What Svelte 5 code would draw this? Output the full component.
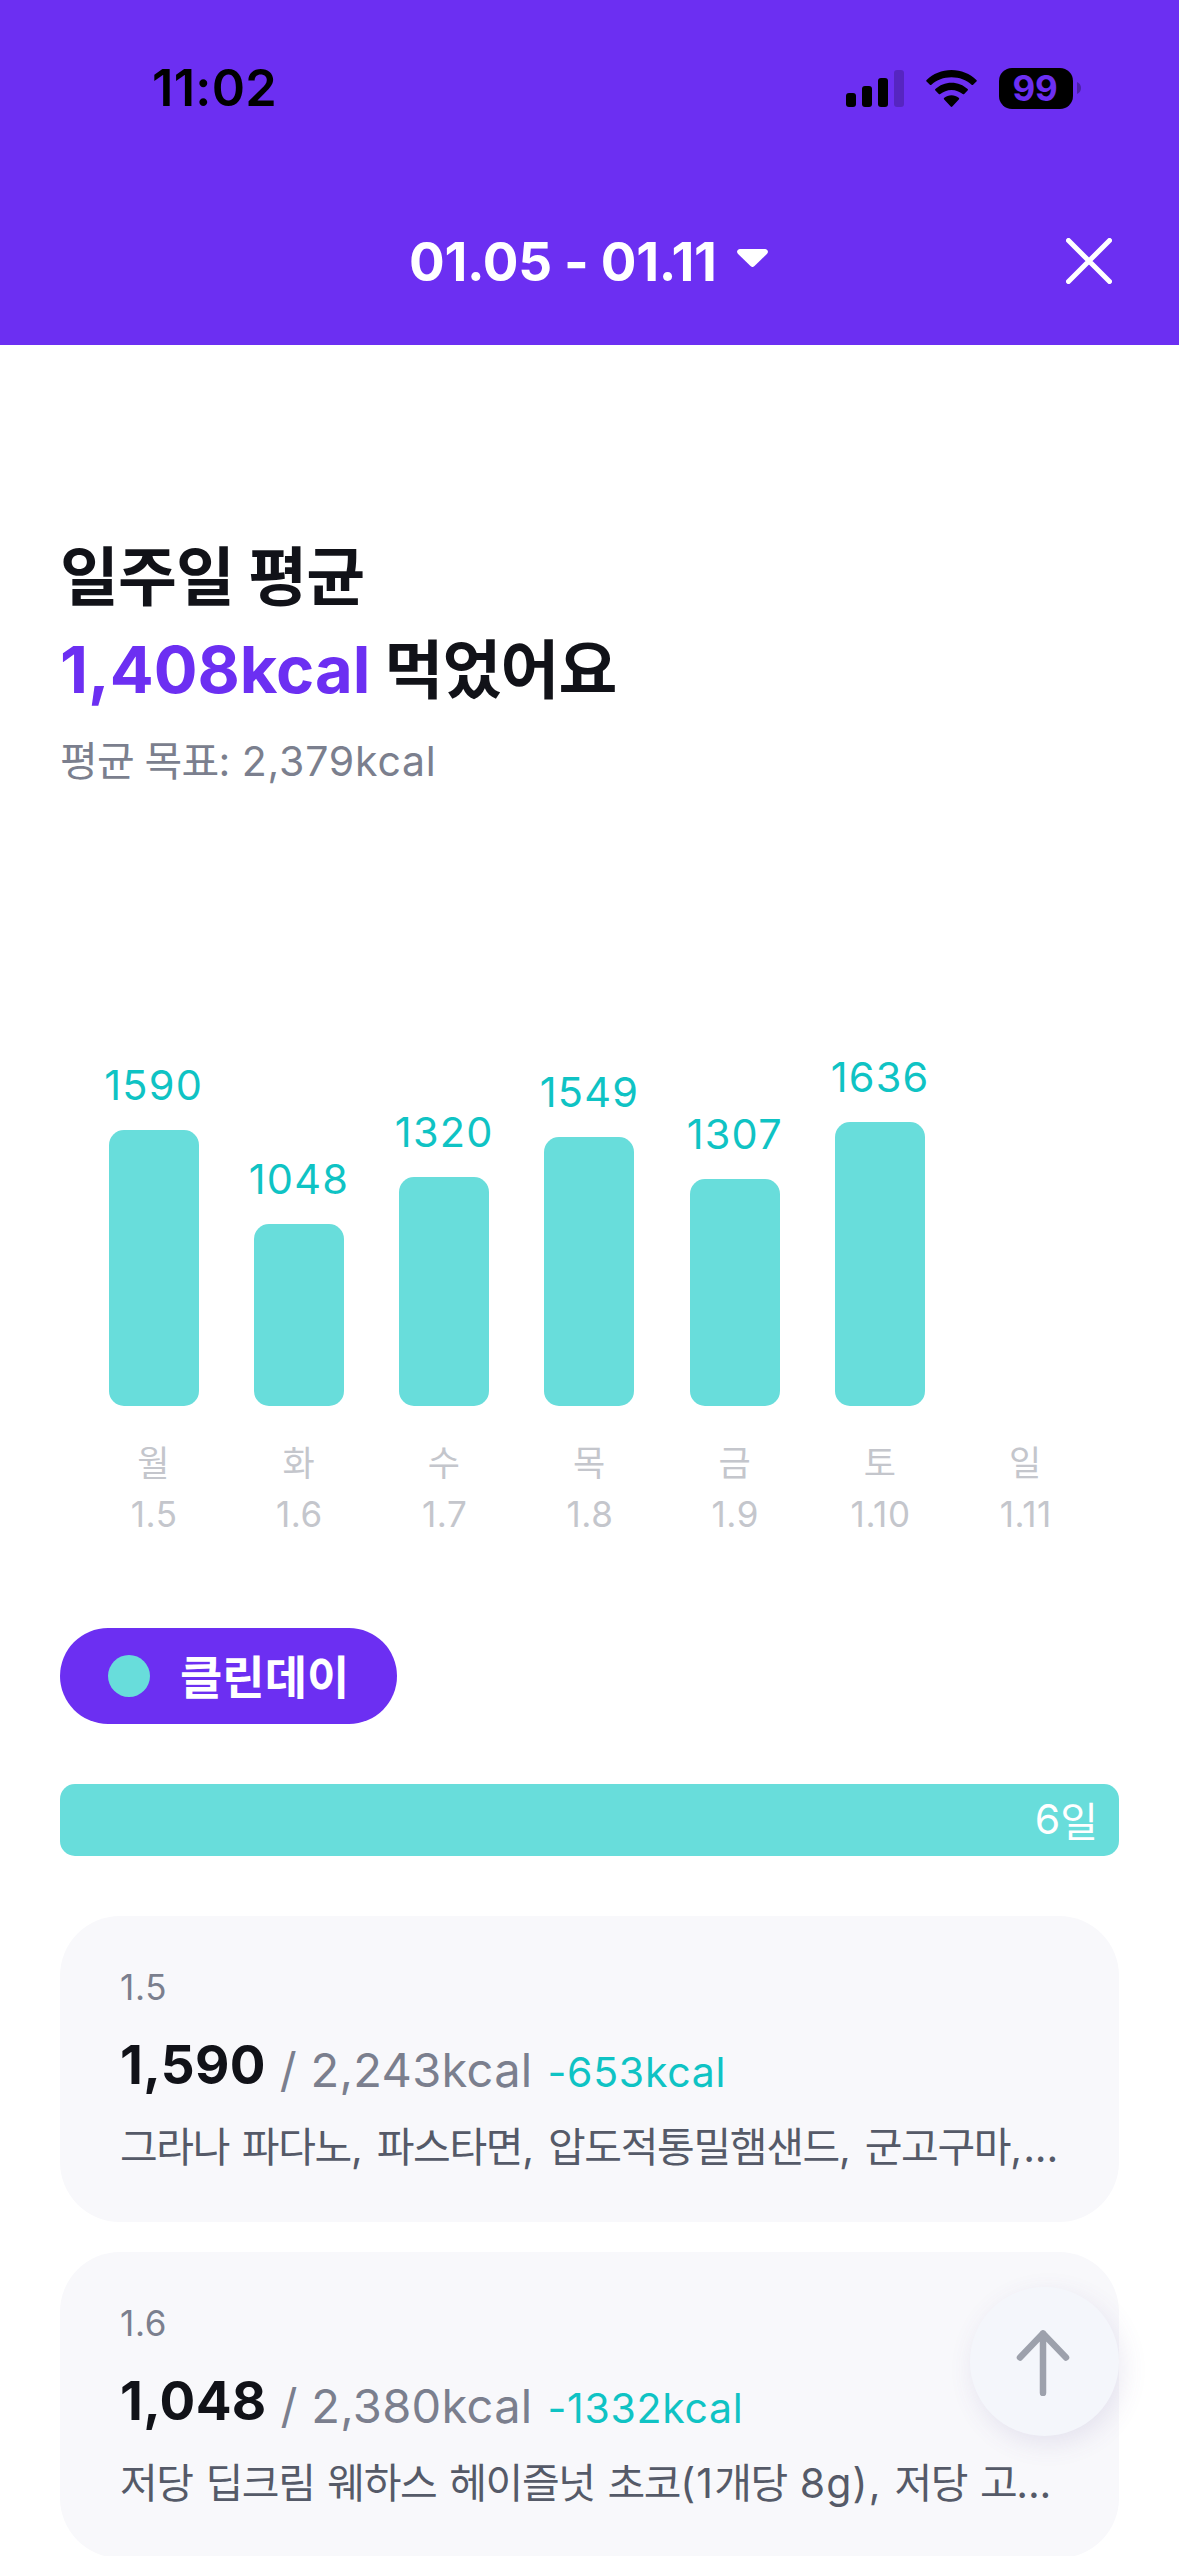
<script>
  const days = [
    { day: '월', date: '1.5', kcal: 1590, height: 276 },
    { day: '화', date: '1.6', kcal: 1048, height: 182 },
    { day: '수', date: '1.7', kcal: 1320, height: 229 },
    { day: '목', date: '1.8', kcal: 1549, height: 269 },
    { day: '금', date: '1.9', kcal: 1307, height: 227 },
    { day: '토', date: '1.10', kcal: 1636, height: 284 },
    { day: '일', date: '1.11', kcal: null, height: 0 }
  ];

  const meals = [
    { date: '1.5', eaten: '1,590', goal: '2,243', diff: '-653', foods: '그라나 파다노, 파스타면, 압도적통밀햄샌드, 군고구마,...' },
    { date: '1.6', eaten: '1,048', goal: '2,380', diff: '-1332', foods: '저당 딥크림 웨하스 헤이즐넛 초코(1개당 8g), 저당 고...' }
  ];

  // Splits text into Hangul, ellipsis and other runs, which are tracked differently.
  function runs(text) {
    return text
      .match(/[가-힣]+|\.{3}|[^가-힣.]+/g)
      .map((t) => ({ t, ko: /[가-힣]/.test(t), dots: t === '...' }));
  }
</script>

<div class="screen">
  <header>
    <div class="status">
      <span class="time">11:02</span>
      <div class="indicators">
        <svg class="signal" width="58" height="37" viewBox="0 0 58 37">
          <rect x="0" y="23" width="10" height="14" rx="3" />
          <rect x="16" y="16" width="10" height="21" rx="3" />
          <rect x="32" y="8" width="10" height="29" rx="3" />
          <rect x="48" y="0" width="10" height="37" rx="3" opacity="0.2" />
        </svg>
        <svg class="wifi" width="51" height="37" viewBox="0 0 51 37">
          <path d="M25.5 0C15.800 0 7 3.800 .6 9.900a1.100 1.100 0 0 0 0 1.600l3.300 3.300c.4.4 1.100.4 1.500 0C10.700 9.900 17.700 7.200 25.500 7.200s14.800 2.700 20.100 7.600c.4.4 1.100.4 1.500 0l3.300-3.300a1.100 1.100 0 0 0 0-1.600C44 3.800 35.200 0 25.500 0Z" />
          <path d="M25.500 12.700c-6.200 0-11.900 2.400-16.100 6.300a1.100 1.100 0 0 0 0 1.600l3.400 3.400c.4.400 1.100.4 1.500.1 3-2.600 6.900-4.200 11.200-4.200s8.200 1.600 11.200 4.200c.4.3 1.100.3 1.500-.1l3.400-3.400a1.100 1.100 0 0 0 0-1.600c-4.200-3.900-9.900-6.300-16.100-6.300Z" />
          <path d="M25.500 25.300c-2.700 0-5.200 1-7.200 2.500a1.100 1.100 0 0 0-.1 1.700l6.500 7c.4.5 1.200.5 1.600 0l6.500-7a1.100 1.100 0 0 0-.1-1.700c-2-1.500-4.500-2.500-7.200-2.500Z" />
        </svg>
        <div class="battery"><span class="level">99</span></div>
        <svg class="nub" width="4" height="12" viewBox="0 0 4 12"><path d="M0 0c2.500 1 4 3.300 4 6s-1.500 5-4 6Z" /></svg>
      </div>
    </div>
    <div class="titlebar">
      <span class="range">01.05 - 01.11</span>
      <svg class="caret" width="31" height="18" viewBox="0 0 31 18"><path d="M3 0h25c2.600 0 3.900 3 2.100 4.800l-12.600 12.300a2.900 2.900 0 0 1-4 0L.9 4.800C-.9 3 .4 0 3 0Z" /></svg>
      <svg class="close" width="46" height="46" viewBox="0 0 46 46"><path d="M2.500 2.500l41 41M43.500 2.500l-41 41" /></svg>
    </div>
  </header>

  <main>
    <h1>
      <span class="line">일주일 평균</span>
      <span class="line"><em>1,408kcal</em> 먹었어요</span>
    </h1>
    <p class="target"><span class="ko">평균 목표:</span> 2,379kcal</p>

    <section class="chart">
      {#each days as d}
        <div class="col">
          <div class="plot">
            {#if d.kcal}
              <span class="value">{d.kcal}</span>
              <div class="bar" style="height: {d.height}px"></div>
            {/if}
          </div>
          <span class="day">{d.day}</span>
          <span class="date">{d.date}</span>
        </div>
      {/each}
    </section>

    <div class="pill"><i class="dot"></i><span class="label">클린데이</span></div>
    <div class="total">6<span>일</span></div>

    {#each meals as m}
      <article class="card">
        <span class="when">{m.date}</span>
        <div class="numbers">
          <strong>{m.eaten}</strong>
          <span class="goal">/ {m.goal}kcal</span>
          <span class="diff">{m.diff}kcal</span>
        </div>
        <p class="foods">{#each runs(m.foods) as r}<span class:hangul={r.ko} class:dots={r.dots}>{r.t}</span>{/each}</p>
      </article>
    {/each}
  </main>

  <button class="top" aria-label="맨 위로">
    <svg width="54" height="66" viewBox="0 0 54 66"><path d="M27 63V3.500M4 27.500L27 3.500l23 24" /></svg>
  </button>
</div>

<style>
  :global(body) {
    background: #fff;
  }
  .screen {
    position: relative;
    width: 1179px;
    height: 2556px;
    overflow: hidden;
    background: #fff;
    color: #111218;
    font-family: Inter, 'Noto Sans CJK KR', sans-serif;
  }
  header {
    display: flex;
    flex-direction: column;
    height: 345px;
    background: #6c2ff2;
  }
  .status {
    display: flex;
    justify-content: space-between;
    padding: 58px 98px 0 152px;
    height: 60px;
    align-items: center;
    color: #000;
  }
  .time {
    padding-bottom: 1px;
    font-size: 50.5px;
    font-weight: 600;
    letter-spacing: 0.3px;
  }
  .indicators {
    display: flex;
    align-items: center;
  }
  .wifi {
    margin-left: 22px;
  }
  .battery {
    display: flex;
    align-items: center;
    justify-content: center;
    box-sizing: border-box;
    width: 74px;
    height: 41px;
    margin-left: 22px;
    padding: 0 2px 1px 0;
    border-radius: 13px;
    background: #000;
  }
  .level {
    color: #6c2ff2;
    font-size: 35px;
    font-weight: 700;
    letter-spacing: -0.3px;
  }
  .nub {
    margin-left: 4px;
    opacity: 0.3;
  }
  .titlebar {
    display: grid;
    grid-template-columns: auto auto 1fr;
    align-items: center;
    height: 86px;
    padding: 100px 67px 0 409px;
    color: #fff;
  }
  .range {
    padding-top: 2px;
    font-size: 53px;
    font-weight: 700;
    letter-spacing: -0.3px;
    white-space: pre;
  }
  .caret {
    margin-left: 20px;
    margin-bottom: 6px;
    fill: #fff;
  }
  .close {
    justify-self: end;
    fill: none;
    stroke: #fff;
    stroke-width: 5;
    stroke-linecap: round;
  }
  main {
    padding: 185px 60px 0;
  }
  h1 {
    margin: 0;
    font-size: 64px;
    font-weight: 700;
    line-height: 93px;
  }
  .line {
    display: block;
    letter-spacing: -0.9px;
  }
  em {
    color: #6c2ff2;
    font-style: normal;
    font-size: 65px;
    font-weight: 700;
    letter-spacing: 0;
  }
  .target {
    margin: 15px 0 0;
    color: #7b7f8e;
    font-size: 41px;
    line-height: 60px;
    letter-spacing: 0.8px;
  }
  .target .ko {
    letter-spacing: -0.8px;
  }
  .chart {
    display: grid;
    grid-template-columns: repeat(7, 1fr);
    margin: 205px 21px 0;
  }
  .col {
    display: flex;
    flex-direction: column;
    align-items: center;
  }
  .plot {
    display: flex;
    flex-direction: column;
    align-items: center;
    justify-content: flex-end;
    height: 410px;
  }
  .value {
    margin-bottom: 15px;
    color: #0fc3c4;
    font-size: 41.5px;
    font-weight: 440;
    line-height: 60px;
    letter-spacing: 1.2px;
  }
  .bar {
    width: 90px;
    border-radius: 15px;
    background: #68dddb;
  }
  .day,
  .date {
    color: #c4c6cc;
    font-size: 35px;
    line-height: 51px;
    letter-spacing: 0.6px;
  }
  .day {
    margin-top: 32px;
  }
  .date {
    padding-left: 1px;
  }
  .pill {
    display: flex;
    align-items: center;
    width: fit-content;
    height: 96px;
    margin-top: 88px;
    padding: 0 48px;
    border-radius: 48px;
    background: #6c2ff2;
    color: #fff;
    font-size: 46px;
    font-weight: 700;
  }
  .label {
    padding-bottom: 5px;
  }
  .dot {
    width: 42px;
    height: 42px;
    margin-right: 30px;
    border-radius: 50%;
    background: #68dddb;
  }
  .total {
    display: flex;
    align-items: center;
    justify-content: flex-end;
    box-sizing: border-box;
    height: 72px;
    margin: 60px 0;
    padding: 0 21px 2px 0;
    border-radius: 15px;
    background: #68dddb;
    color: #fff;
    font-size: 41px;
  }
  .card {
    display: flex;
    flex-direction: column;
    box-sizing: border-box;
    height: 306px;
    margin-bottom: 30px;
    padding: 46px 60px 0;
    border-radius: 60px;
    background: #f8f8fb;
  }
  .when {
    color: #7b7f8e;
    font-size: 35px;
    line-height: 51px;
    letter-spacing: 0.7px;
  }
  .numbers {
    display: flex;
    align-items: flex-end;
    height: 72px;
    margin-top: 16px;
    white-space: nowrap;
  }
  strong {
    font-size: 53px;
    line-height: 72px;
    letter-spacing: 0.3px;
  }
  .goal {
    margin-left: 14px;
    color: #7b7f8e;
    font-size: 47px;
    line-height: 62px;
    letter-spacing: 0.3px;
  }
  .diff {
    margin-left: 15px;
    color: #0fc3c4;
    font-size: 41px;
    font-weight: 440;
    line-height: 58px;
    letter-spacing: 0.7px;
  }
  .foods {
    margin: 16px -20px 0 0;
    color: #555a68;
    font-size: 41px;
    line-height: 60px;
    letter-spacing: 1.2px;
    white-space: nowrap;
  }
  .hangul {
    letter-spacing: -1.35px;
  }
  .dots {
    letter-spacing: -0.2px;
  }
  .top {
    position: absolute;
    right: 60px;
    bottom: 120px;
    display: flex;
    align-items: center;
    justify-content: center;
    box-sizing: border-box;
    width: 149px;
    height: 149px;
    padding: 3px 4px 0 0;
    border: 0;
    border-radius: 50%;
    background: #f4f6fb;
    box-shadow: 4px 8px 26px rgba(90, 70, 150, 0.12);
  }
  .top path {
    fill: none;
    stroke: #9da1ac;
    stroke-width: 6.500;
    stroke-linecap: round;
    stroke-linejoin: round;
  }
</style>
